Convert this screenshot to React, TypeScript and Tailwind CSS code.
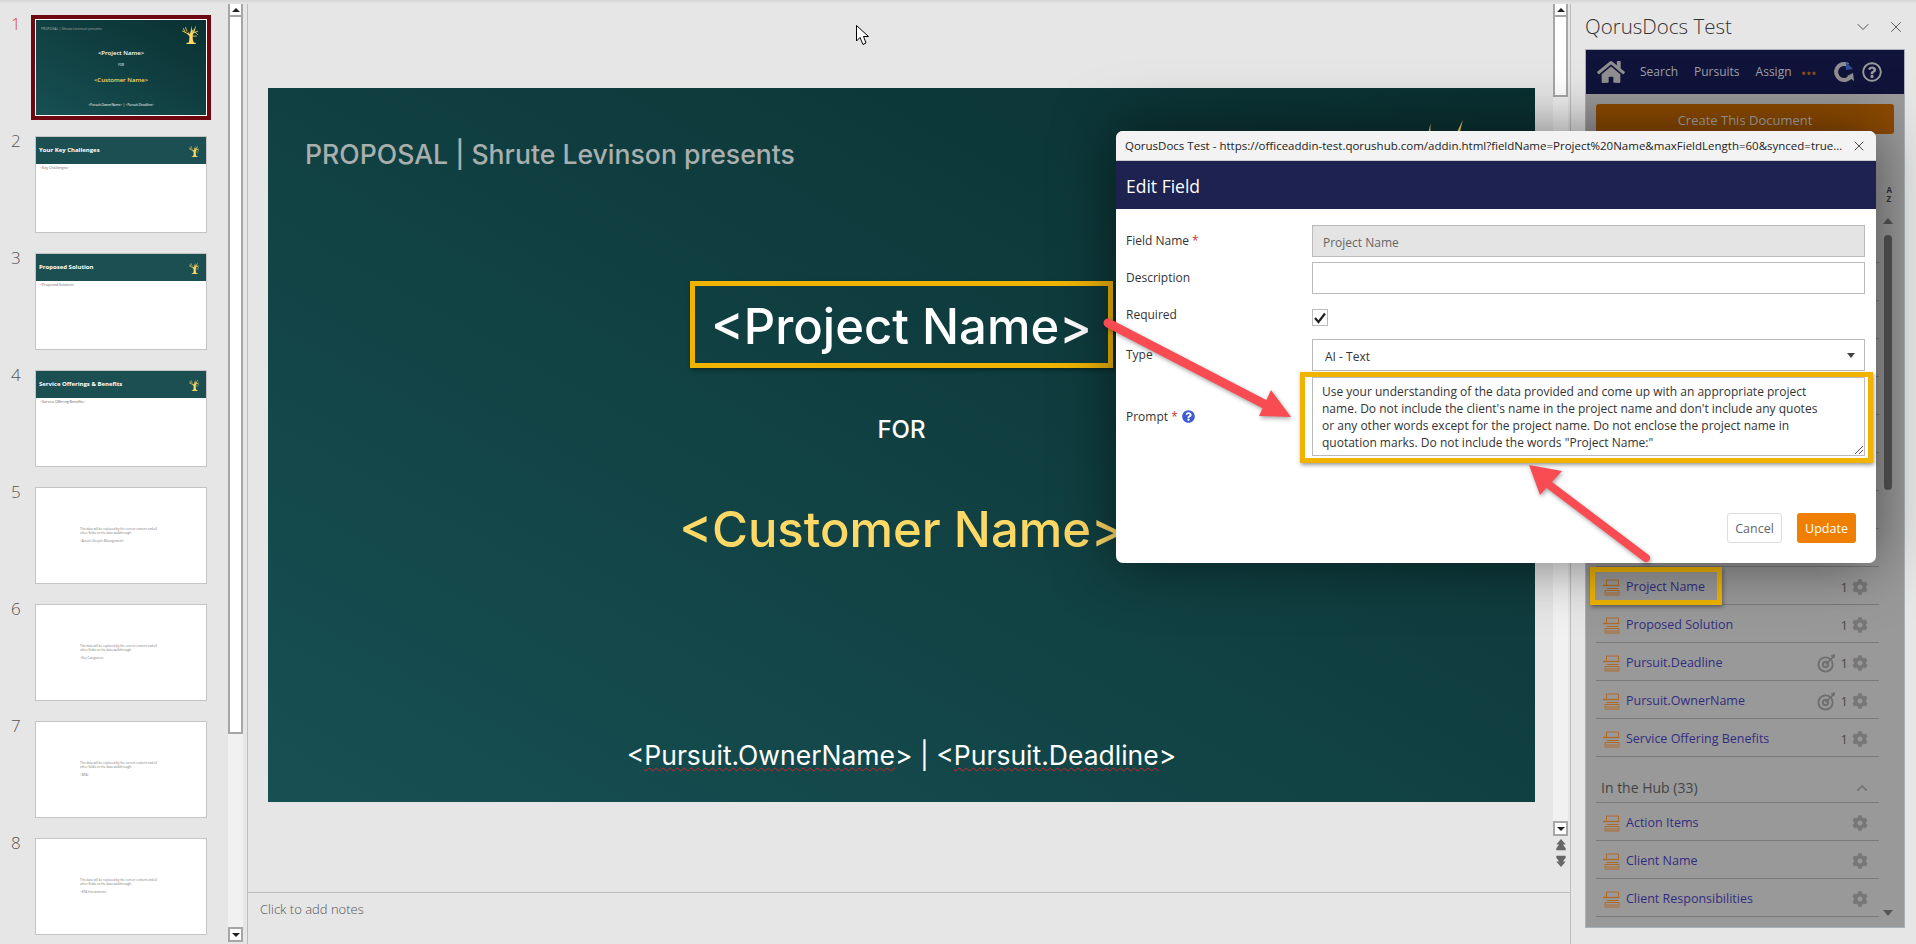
import { FaChevronUp, FaCog, FaHome, FaQuestionCircle, FaRegQuestionCircle } from 'react-icons/fa';
import { ChevronDown, X } from 'lucide-react';

const FILLER = 'This data will be replaced by the correct content and all other fields on the data walkthrough.';

function TreeLogo({ className }: { className: string }) {
  return (
    <svg viewBox="0 0 100 120" className={className} fill="#ffd966">
      <path d="M40 118 C46 100 48 84 45 68 L26 52 L40 54 L34 38 L50 58 L62 3 L62 36 L72 26 L64 52 L89 0 L80 38 L68 60 C65 82 68 102 78 118 Z" />
      <g fill="none" stroke="#ffd966" strokeWidth="5" strokeLinecap="round">
        <path d="M34 54 L2 38 M20 46 L8 22 M30 38 L22 16" />
        <path d="M70 50 L98 40 M82 44 L98 60 M64 70 L90 70" />
      </g>
      <path d="M28 112 H86 V120 H28 Z" />
    </svg>
  );
}

function ScrollBar({ thumb }: { thumb: string }) {
  return (
    <div className="flex w-[15px] flex-col">
      <div className="flex h-[15px] items-center justify-center border-2 border-[#a6a6a6] bg-white">
        <div className="h-0 w-0 border-x-[4px] border-b-[4px] border-x-transparent border-b-[#222]" />
      </div>
      <div className={`${thumb} border-2 border-t-0 border-[#a6a6a6] bg-white`} />
      <div className="flex-1 bg-[#f1f1f1]" />
      <div className="flex h-[15px] items-center justify-center border-2 border-[#a6a6a6] bg-white">
        <div className="h-0 w-0 border-x-[4px] border-t-[4px] border-x-transparent border-t-[#222]" />
      </div>
    </div>
  );
}

function TitleThumb({ title, body }: { title: string; body: string }) {
  return (
    <div className="h-[97px] w-[172px] border border-[#c4c4c4] bg-white">
      <div className="flex h-[27px] items-center justify-between bg-[#1c4f52] pl-[3px] pr-[7px]">
        <span className="text-[6px] font-bold text-white">{title}</span>
        <TreeLogo className="h-[12px] w-[10px]" />
      </div>
      <div className="pl-[4px] pt-[1px] text-[3.6px] text-[#666]">{body}</div>
    </div>
  );
}

function TextThumb({ last }: { last: string }) {
  return (
    <div className="h-[97px] w-[172px] border border-[#c4c4c4] bg-white pl-[44px] pt-[39px] text-[3px] leading-[4px] text-[#777]">
      <div className="w-[84px]">{FILLER}</div>
      <div className="mt-[4px]">{last}</div>
    </div>
  );
}

function SlideThumbOne() {
  return (
    <div className="relative flex h-[97px] w-[172px] flex-col items-center border border-white bg-[linear-gradient(to_bottom_left,#0a3031,#175053)] outline-[4px] outline-[#6f0711]">
      <div className="mt-[6px] w-full pl-[5px] text-[3.4px] leading-[5px] text-[#a9aeae]">PROPOSAL | Shrute Levinson presents</div>
      <div className="mt-[18px] text-[6px] font-semibold leading-[8px] text-white">&lt;Project Name&gt;</div>
      <div className="mt-[6px] text-[3px] leading-[4px] text-white">FOR</div>
      <div className="mt-[9px] text-[6px] font-semibold leading-[8px] text-[#ffd966]">&lt;Customer Name&gt;</div>
      <div className="mt-[19px] text-[3.2px] leading-[4px] text-white">&lt;Pursuit.OwnerName&gt; | &lt;Pursuit.Deadline&gt;</div>
      <TreeLogo className="absolute right-[8px] top-[5px] h-[19px] w-[16px]" />
    </div>
  );
}

function ThumbRow({ n, children }: { n: number; children: React.ReactNode }) {
  return (
    <div className="flex">
      <div className={`-mt-[5px] h-[20px] w-[35px] pl-[11px] text-[17px] font-light leading-[20px] ${n === 1 ? 'text-[#d9462c]' : 'text-[#555]'}`}>{n}</div>
      {children}
    </div>
  );
}

function RowIcon() {
  return (
    <svg viewBox="0 0 17 17" className="h-[17px] w-[17px]" fill="none" stroke="#b06a28" strokeWidth="1">
      <path d="M3.5 6 V1 H15.5 V6" />
      <path d="M1.5 6.5 H16.5" strokeWidth="1.3" />
      <path d="M3.5 9.5 H15.5 M2 11.5 H16 V16 H2 Z M3 14 H15" />
      <circle cx="1" cy="6.5" r="1" fill="#b06a28" stroke="none" />
    </svg>
  );
}

function TargetIcon() {
  return (
    <svg viewBox="0 0 20 20" className="h-[19px] w-[19px]" fill="none" stroke="#6f6f6f">
      <circle cx="9" cy="11" r="7.5" strokeWidth="2" />
      <circle cx="9" cy="11" r="2.8" strokeWidth="2" />
      <path d="M9 11 L18 2" strokeWidth="1.6" />
      <path d="M15 2 L18.5 0.5 L18 4 Z" fill="#6f6f6f" />
    </svg>
  );
}

function FieldRow({ label, count, target }: { label: string; count?: boolean; target?: boolean }) {
  return (
    <div className="flex h-[38px] items-center border-b border-[#7a7a7a] pl-[7px] pr-[11px] pt-[3px]">
      <RowIcon />
      <span className="ml-[6px] flex-1 text-[12.5px] text-[#332d80]">{label}</span>
      {target && <TargetIcon />}
      {count && <span className="ml-[5px] mt-[2px] text-[13px] text-[#4a4a4a]">1</span>}
      <FaCog className="ml-[4px] text-[#777]" size={16} />
    </div>
  );
}

function FormLabel({ children, required }: { children: string; required?: boolean }) {
  return (
    <div className="w-[186px] text-[12px] text-[#333]">
      {children}
      {required && <span className="text-[#c0392b]"> *</span>}
    </div>
  );
}

export default function App() {
  const emptyRows = Array.from({ length: 9 }, (_, i) => i);

  return (
    <div className="relative flex h-[944px] w-[1916px] overflow-hidden bg-[#e6e6e6] font-['Open_Sans','Noto_Sans',sans-serif]">
      <div className="absolute inset-x-0 top-0 h-[4px] bg-gradient-to-b from-[#d6d6d6] to-[#e6e6e6]" />

      {/* thumbnails */}
      <div className="flex h-full w-[248px] border-r border-[#bdbdbd] pb-[2px] pt-[2px]">
        <div className="flex w-[228px] flex-col gap-[20px] pt-[17px]">
          <ThumbRow n={1}><SlideThumbOne /></ThumbRow>
          <ThumbRow n={2}><TitleThumb title="Your Key Challenges" body="<Key Challenges>" /></ThumbRow>
          <ThumbRow n={3}><TitleThumb title="Proposed Solution" body="<Proposed Solution>" /></ThumbRow>
          <ThumbRow n={4}><TitleThumb title="Service Offerings & Benefits" body="<Service Offering Benefits>" /></ThumbRow>
          <ThumbRow n={5}><TextThumb last="<Assets Lifecycle Management>" /></ThumbRow>
          <ThumbRow n={6}><TextThumb last="<Key Categories>" /></ThumbRow>
          <ThumbRow n={7}><TextThumb last="<BPA>" /></ThumbRow>
          <ThumbRow n={8}><TextThumb last="<KPA Investments>" /></ThumbRow>
        </div>
        <ScrollBar thumb="h-[717px]" />
      </div>

      {/* editor */}
      <div className="flex h-full w-[1323px] flex-col border-r border-[#bdbdbd]">
        <div className="flex h-[892px] justify-between pr-[2px] pt-[2px]">
          <div className="relative ml-[20px] mt-[86px] flex h-[714px] w-[1267px] flex-col items-center bg-[linear-gradient(to_bottom_left,#0a3031,#175053)] font-['Inter',sans-serif]">
            <div className="mt-[51px] h-[30px] w-full pl-[37px] text-[26.6px] font-medium leading-[30px] text-[#a9aeae]">PROPOSAL | Shrute Levinson presents</div>
            <div className="mt-[128px] h-[60px] text-[49px] font-medium leading-[60px] text-white">&lt;Project Name&gt;</div>
            <div className="mt-[58px] h-[30px] text-[24px] font-medium leading-[30px] text-white">FOR</div>
            <div className="mt-[55px] h-[60px] text-[49px] font-medium leading-[60px] text-[#ffd966]">&lt;Customer Name&gt;</div>
            <div className="mt-[180px] h-[30px] text-[26.5px] leading-[30px] text-white">
              &lt;<span className="underline decoration-wavy decoration-[#d8232a] decoration-1 underline-offset-2">Pursuit.OwnerName</span>&gt; | &lt;<span className="underline decoration-wavy decoration-[#d8232a] decoration-1 underline-offset-2">Pursuit.Deadline</span>&gt;
            </div>
            <TreeLogo className="absolute left-[1088px] top-[32px] h-[144px] w-[120px]" />
          </div>
          <div className="flex flex-col items-center">
            <div className="flex h-[834px]"><ScrollBar thumb="h-[80px]" /></div>
            <svg viewBox="0 0 12 32" className="mt-[2px] h-[30px] w-[12px]" fill="#666">
              <path d="M6 1 L11 7 H8 L11 11 V13 H1 V11 L4 7 H1 Z" />
              <path d="M6 31 L11 25 H8 L11 21 V19 H1 V21 L4 25 H1 Z" />
            </svg>
          </div>
        </div>
        <div className="flex-1 border-t border-[#bdbdbd] pl-[12px] pt-[7px] text-[13px] font-light text-[#555]">Click to add notes</div>
      </div>

      {/* task pane */}
      <div className="flex flex-1 flex-col pl-[14px] pr-[11px]">
        <div className="flex h-[49px] items-center justify-between pt-[4px]">
          <span className="text-[20.5px] font-light text-[#333]">QorusDocs Test</span>
          <div className="flex items-center gap-[14px]">
            <ChevronDown size={20} strokeWidth={1} className="text-[#333]" />
            <X size={18} strokeWidth={1} className="text-[#333]" />
          </div>
        </div>
        <div className="flex h-[879px] flex-col border border-[#aab0b8] bg-[#999]">
          <div className="flex h-[44px] items-center bg-[#10133a] pl-[11px] text-[12px] text-[#a0a0a8]">
            <FaHome size={28} className="text-[#8f8f8f]" />
            <span className="ml-[15px]">Search</span>
            <span className="ml-[16px]">Pursuits</span>
            <span className="ml-[16px]">Assign</span>
            <span className="ml-[10px] text-[11px] font-bold leading-none tracking-[1px] text-[#8c4a1c]">•••</span>
            <svg viewBox="0 0 22 22" className="ml-[16px] h-[22px] w-[22px]">
              <path d="M15 4 A8 8 0 1 0 18 15" fill="none" stroke="#8f8f8f" strokeWidth="4" />
              <path d="M13 1 L20 8 L13 9 Z" fill="#2f4f96" />
              <path d="M14 15 L21 20 L20 12 Z" fill="#8f8f8f" />
            </svg>
            <FaRegQuestionCircle size={20} className="ml-[7px] text-[#9a9a9a]" />
          </div>
          <div className="relative flex-1 px-[10px] pt-[10px]">
            <div className="flex h-[30px] w-[298px] items-center justify-center rounded-[3px] bg-[#8c4a00] pt-[3px] text-[13px] text-[#a8a8a8]">Create This Document</div>
            <div className="absolute right-[12px] top-[91px] flex flex-col text-[8px] font-bold leading-[9px] text-[#333]">
              <span>A</span>
              <span>Z</span>
            </div>
            <div className="absolute right-[11px] top-[124px] h-0 w-0 border-x-[5px] border-b-[6px] border-x-transparent border-b-[#555]" />
            <div className="absolute right-[12px] top-[141px] h-[255px] w-[8px] rounded-full bg-[#555]" />
            <div className="absolute right-[11px] top-[816px] h-0 w-0 border-x-[5px] border-t-[6px] border-x-transparent border-t-[#555]" />
            <div className="mt-[91px] w-[283px]">
              {emptyRows.map((i) => (
                <div key={i} className="h-[38px] border-b border-[#7a7a7a]" />
              ))}
              <FieldRow label="Project Name" count />
              <FieldRow label="Proposed Solution" count />
              <FieldRow label="Pursuit.Deadline" count target />
              <FieldRow label="Pursuit.OwnerName" count target />
              <FieldRow label="Service Offering Benefits" count />
              <div className="flex h-[46px] items-center justify-between border-b border-[#7a7a7a] pl-[5px] pr-[11px] pt-[16px] text-[14px] text-[#444]">
                <span>In the Hub (33)</span>
                <FaChevronUp size={12} className="text-[#777]" />
              </div>
              <FieldRow label="Action Items" />
              <FieldRow label="Client Name" />
              <FieldRow label="Client Responsibilities" />
            </div>
          </div>
        </div>
      </div>

      {/* highlights behind the dialog */}
      <div className="absolute left-[690px] top-[281px] h-[87px] w-[423px] border-[5px] border-[#f0b400] shadow-[1px_2px_4px_rgba(0,0,0,0.4)]" />
      <div className="absolute left-[1590px] top-[567px] h-[38px] w-[132px] border-[5px] border-[#f0b400] shadow-[1px_2px_4px_rgba(0,0,0,0.4)]" />

      {/* dialog */}
      <div className="absolute left-[1116px] top-[131px] flex h-[432px] w-[760px] flex-col overflow-hidden rounded-[7px] bg-white shadow-[0_0_60px_rgba(0,0,0,0.5)]">
        <div className="flex h-[30px] items-center justify-between border-b border-[#ccc] bg-[#f3f3f3] pl-[9px] pr-[9px] text-[11.5px] text-[#222]">
          <span>QorusDocs Test - https://officeaddin-test.qorushub.com/addin.html?fieldName=Project%20Name&amp;maxFieldLength=60&amp;synced=true...</span>
          <X size={16} strokeWidth={1.2} className="text-[#222]" />
        </div>
        <div className="flex h-[48px] items-center bg-[#1d2250] pl-[10px] pt-[3px] text-[17.5px] text-white">Edit Field</div>
        <div className="flex flex-1 flex-col pl-[10px] pr-[11px] pt-[16px]">
          <div className="flex h-[32px] items-center">
            <FormLabel required>Field Name</FormLabel>
            <div className="flex h-[32px] flex-1 items-center border border-[#bbb] bg-[#e4e4e4] pl-[10px] pt-[3px] text-[12px] text-[#666]">Project Name</div>
          </div>
          <div className="mt-[5px] flex h-[32px] items-center">
            <FormLabel>Description</FormLabel>
            <div className="h-[32px] flex-1 border border-[#bbb] bg-white" />
          </div>
          <div className="mt-[15px] flex h-[17px] items-center">
            <div className="-mt-[5px]"><FormLabel>Required</FormLabel></div>
            <div className="flex h-[17px] w-[16px] items-center justify-center border border-[#bbb]">
              <svg viewBox="0 0 14 14" className="h-[14px] w-[14px]" fill="none" stroke="#222" strokeWidth="2.2">
                <path d="M2 7 L5.5 11 L12 2.5" />
              </svg>
            </div>
          </div>
          <div className="mt-[13px] flex h-[32px] items-center">
            <FormLabel>Type</FormLabel>
            <div className="flex h-[32px] flex-1 items-center justify-between border border-[#bbb] pl-[12px] pr-[9px] pt-[3px] text-[12px] text-[#333]">
              <span>AI - Text</span>
              <div className="-mt-[3px] h-0 w-0 border-x-[4px] border-t-[5px] border-x-transparent border-t-[#444]" />
            </div>
          </div>
          <div className="mt-[6px] flex h-[79px] items-center">
            <div className="flex w-[186px] items-center gap-[4px]">
              <span className="text-[12px] text-[#333]">Prompt <span className="text-[#c0392b]">*</span></span>
              <FaQuestionCircle size={13} className="text-[#3f5bd0]" />
            </div>
            <div className="relative h-[79px] flex-1 border border-[#bbb] pl-[9px] pt-[5px] text-[12px] leading-[17px] text-[#333]">
              <div>Use your understanding of the data provided and come up with an appropriate project</div>
              <div>name. Do not include the client's name in the project name and don't include any quotes</div>
              <div>or any other words except for the project name. Do not enclose the project name in</div>
              <div>quotation marks. Do not include the words "Project Name:"</div>
              <svg viewBox="0 0 8 8" className="absolute bottom-[1px] right-[1px] h-[8px] w-[8px]" stroke="#555" fill="none">
                <path d="M0 8 L8 0 M4 8 L8 4" />
              </svg>
            </div>
          </div>
          <div className="mt-[57px] flex justify-end gap-[15px] pr-[9px]">
            <div className="flex h-[30px] w-[55px] items-center justify-center rounded-[3px] border border-[#ddd] pt-[2px] text-[12.5px] text-[#666]">Cancel</div>
            <div className="flex h-[30px] w-[59px] items-center justify-center rounded-[3px] bg-[#ee7f00] pt-[2px] text-[12.5px] text-white">Update</div>
          </div>
        </div>
      </div>

      {/* prompt highlight */}
      <div className="absolute left-[1300px] top-[372px] h-[91px] w-[573px] border-[5px] border-[#f0b400] shadow-[1px_2px_4px_rgba(0,0,0,0.4)]" />

      {/* arrows */}
      <svg className="pointer-events-none absolute left-0 top-0 h-[944px] w-[1916px] drop-shadow-[1px_2px_2px_rgba(0,0,0,0.35)]" viewBox="0 0 1916 944">
        <path d="M1108 323 L1268 406" stroke="#f94b52" strokeWidth="9" strokeLinecap="round" />
        <path d="M1291 417 L1271 390 L1259 416 Z" fill="#f94b52" />
        <path d="M1548 484 L1646 558" stroke="#f94b52" strokeWidth="8" strokeLinecap="round" />
        <path d="M1529 465 L1562 471 L1540 495 Z" fill="#f94b52" />
      </svg>

      {/* cursor */}
      <svg className="pointer-events-none absolute left-[856px] top-[25px] h-[21px] w-[14px]" viewBox="0 0 14 21">
        <path d="M0.5 0.5 V16 L4 12.5 L7 19.5 L10 18 L7.5 11.5 H12.5 Z" fill="white" stroke="black" />
      </svg>
    </div>
  );
}
